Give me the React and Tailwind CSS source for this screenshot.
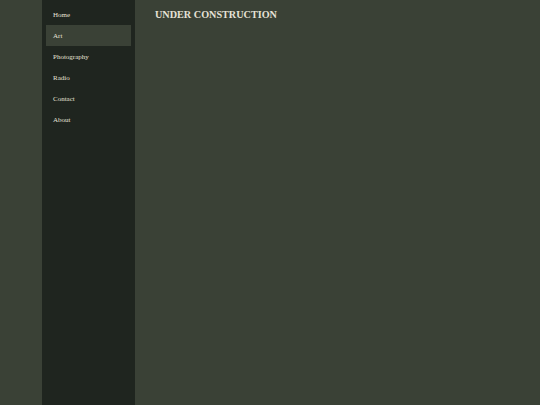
const items = ['Home', 'Art', 'Photography', 'Radio', 'Contact', 'About'];

export default function App() {
  return (
    <div className="flex min-h-[405px] w-full bg-[#3a4136]" style={{ fontFamily: '"Liberation Serif", serif' }}>
      <div className="w-[42px] shrink-0" />
      <nav className="w-[93px] shrink-0 bg-[#1f251f] px-[4px] pt-[4px]">
        {items.map((item) => (
          <div
            key={item}
            className={
              'flex h-[21px] items-center pl-[7px] pt-[1px] text-[7px] text-[#e6e2d6] ' +
              (item === 'Art' ? 'bg-[#3a4136]' : '')
            }
          >
            {item}
          </div>
        ))}
      </nav>
      <main className="flex-1 pl-[20px] pt-[8px]">
        <h1 className="text-[10.2px] font-bold leading-[13px] text-[#e6e2d6]">UNDER CONSTRUCTION</h1>
      </main>
    </div>
  );
}
